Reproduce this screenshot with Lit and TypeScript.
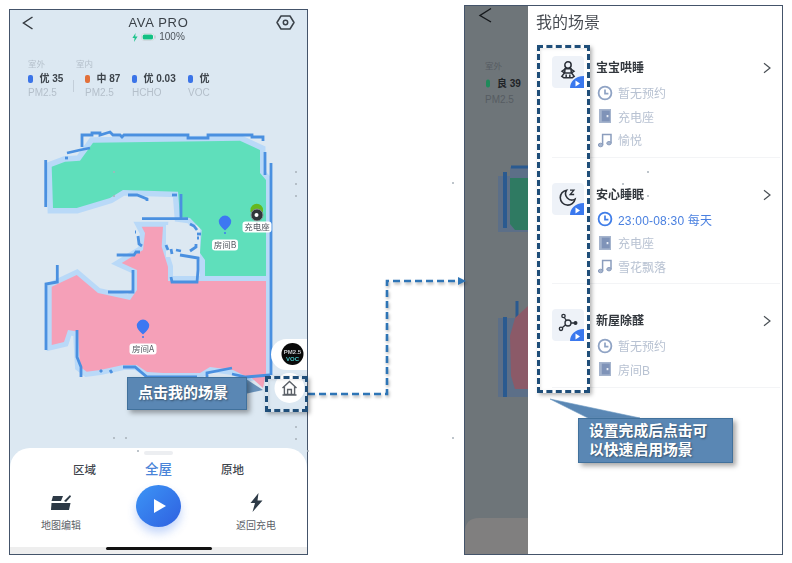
import { LitElement, html, css, svg } from "lit";
import { customElement } from "lit/decorators.js";

const GREEN = "51.7,166.7 65,161.7 80,160.7 93,142.7 240,140.7 260,150 260,173 266,180 266,276 205,276 205,260 200,253 201.7,230 190,218 180,216.7 178,191.7 123,190 110,198 76.7,208 53,208";
const PINK = "51.7,286.7 76.7,275 98,293 130,300 137,290 137,270 121.7,263 143,250 145,233 141.7,226.7 163,226.7 161.7,246.7 168,266.7 168,281 266,281 266,373 246.7,376.7 233,370 210,367 200,373 163,373 147,372 136.7,365 123,365 100,370 86.7,371.7 80,366.7 78,331.7 68,330 64,342 51.7,345";
const WALLS = [
  "82,147 82,135 92,135 92,133 100,133 100,135 110,132 113,135 120,135 122,137 124,135 188,135 188,138 208,138 208,135 252,135 252,137 263,137 263,141",
  "45.7,160 45.7,207", "67,153 80,150 90,148", "65,158 68,158", "265,152 265,175", "271,163 271,375",
  "142,218.7 188,218.7", "181,194 181,218.7", "128,195 137,195 147,199 147,201", "172,195 177,195",
  "190,224 194,226 197,230", "197,234 201,234", "197,238 199,238", "196,244 196,247 190,251", "181,251 176,250", "166,245 168,250", "171,249 172,254",
  "180,255 198,258 198,270 197,282 172,282 171,277", "135,232 136,232", "138,236 139,244 142,246",
  "116.7,255 134,255 136,252 140,252", "57.3,265 57.3,282 46,284 46,350",
  "108,292 133,292 133,270", "77,330 77,357 81,367 81,377",
  "100,370 102,372", "110,370 112,373", "123,367 135,367 147,377 197,377", "207,383 207,373 232,368",
  "232,374 246,377 270,375",
];
const DOTS = [[114,172],[296,172],[296,184],[296,196],[114,196],[114,438],[126,438],[296,427],[296,439]];
const ICON_BLUE = "#8fa3c4";

function clock(color: string) {
  return svg`<svg class="ic" viewBox="0 0 16 16"><circle cx="8" cy="8" r="6.4" fill="none" stroke=${color} stroke-width="1.8"/><path d="M8 4.4V8.6H11.4" fill="none" stroke=${color} stroke-width="1.7"/></svg>`;
}
const door = svg`<svg class="ic" viewBox="0 0 16 16"><rect x="2" y="1" width="12" height="14" fill="#a5b4cd"/><rect x="4.8" y="2.6" width="8" height="10.8" fill="#7f93b8"/><rect x="9.6" y="7" width="1.8" height="2.2" fill="#e8edf5"/></svg>`;
const note = svg`<svg class="ic" viewBox="0 0 16 16"><path d="M5.6 13V2.4H14V11" fill="none" stroke="#8b9dbd" stroke-width="1.5"/><ellipse cx="3.6" cy="13" rx="2.3" ry="1.8" fill="#a5b4cd" stroke="#8b9dbd" stroke-width="1"/><ellipse cx="12" cy="11.2" rx="2.2" ry="1.7" fill="#a5b4cd" stroke="#8b9dbd" stroke-width="1"/></svg>`;

const babyIcon = svg`<svg class="glyph" viewBox="0 0 24 24" fill="none" stroke="#2b3038" stroke-width="1.8"><circle cx="12" cy="6" r="3.8"/><path d="M8.4 10.5H15.6L16 15.5H8Z"/><path d="M8.4 11 4.8 13.4 7.8 15.6M15.6 11 19.2 13.4 16.2 15.6"/><path d="M7.8 15.5 4.6 19.6 7 21.4H17L19.4 19.6 16.2 15.5"/><path d="M9.8 21V17.4M14.2 21V17.4"/></svg>`;
const moonIcon = svg`<svg class="glyph" viewBox="0 0 24 24" fill="none" stroke="#2b3038" stroke-width="1.9"><path d="M10.4 3.8A9 9 0 1 0 20.5 14.6 7.6 7.6 0 0 1 10.4 3.8Z"/><path d="M14.4 3.8H19L14.6 9H19.4" stroke-width="1.6"/></svg>`;
const moleculeIcon = svg`<svg class="glyph" viewBox="0 0 24 24" fill="none" stroke="#2b3038" stroke-width="1.6"><circle cx="12" cy="12" r="3.6"/><circle cx="6.6" cy="3.6" r="2"/><circle cx="3.6" cy="19" r="2"/><circle cx="21" cy="12" r="1.6" fill="#2b3038"/><path d="M7.6 5.4 10 9M5 17.6 9.2 14M15.6 12H19.4"/></svg>`;

const scenes = [
  { title: "宝宝哄睡", icon: babyIcon, items: [{ k: "clock", t: "暂无预约" }, { k: "door", t: "充电座" }, { k: "note", t: "愉悦" }] },
  { title: "安心睡眠", icon: moonIcon, items: [{ k: "active", t: "23:00-08:30 每天" }, { k: "door", t: "充电座" }, { k: "note", t: "雪花飘落" }] },
  { title: "新屋除醛", icon: moleculeIcon, items: [{ k: "clock", t: "暂无预约" }, { k: "door", t: "房间B" }] },
];
const metrics = [
  { c: "#3b74e8", v: "优 35", l: "PM2.5", w: 47, sep: true },
  { c: "#e2703a", v: "中 87", l: "PM2.5", w: 47, sep: false },
  { c: "#3b74e8", v: "优 0.03", l: "HCHO", w: 56, sep: false },
  { c: "#3b74e8", v: "优", l: "VOC", w: 40, sep: false },
];

function pin(x: number, y: number) {
  return svg`<path d="M${x} ${y + 7.5}C${x - 4} ${y + 4} ${x - 6.2} ${y + 1.5} ${x - 6.2} ${y - 1.2}A6.2 6.2 0 1 1 ${x + 6.2} ${y - 1.2}C${x + 6.2} ${y + 1.5} ${x + 4} ${y + 4} ${x} ${y + 7.5}Z" fill="#3d78f2"/><circle cx=${x} cy=${y + 10} r="1" fill="#3d78f2"/>`;
}
function label(cx: number, cy: number, w: number, t: string) {
  return svg`<rect x=${cx - w / 2} y=${cy - 5.5} width=${w} height="11" rx="3" fill="#fff"/><text x=${cx} y=${cy + 3} text-anchor="middle" font-size="8.5" fill="#555b63" font-family="'Noto Sans CJK SC',sans-serif">${t}</text>`;
}

@customElement("app-root")
export class AppRoot extends LitElement {
  static styles = css`
    :host { display: block; width: 792px; height: 563px; position: relative; overflow: hidden; background: #fff;
      font-family: "Liberation Sans", "Noto Sans CJK SC", sans-serif; }
    .page { display: flex; align-items: flex-start; padding: 5px 0 0 9px; height: 563px; box-sizing: border-box; }
    .phone { box-sizing: border-box; width: 299px; height: 546px; margin-top: 4px; border: 1px solid #44546a; background: #dce8f2;
      display: flex; flex-direction: column; position: relative; overflow: hidden; }
    .soft { filter: blur(0.35px); display: flex; flex-direction: column; height: 100%; }
    .nav { display: grid; grid-template-columns: 40px 1fr 40px; height: 43px; flex: none; }
    .back { margin: 5px 0 0 12px; width: 12px; height: 16px; }
    .center { display: flex; flex-direction: column; align-items: center; padding-top: 4px; }
    .name { font-size: 13px; line-height: 17px; color: #3a4148; letter-spacing: .7px; }
    .status { display: flex; align-items: center; gap: 3px; font-size: 10px; line-height: 12px; color: #4c535a; }
    .hex { margin: 5px 0 0 9px; width: 19px; height: 15px; }
    .air { padding: 5px 0 0 18px; flex: none; height: 52px; box-sizing: border-box; }
    .air-heads { display: flex; font-size: 8.5px; line-height: 12px; color: #b4bfca; }
    .air-heads span:first-child { width: 48px; }
    .air-row { display: flex; margin-top: 2px; }
    .metric { flex: none; box-sizing: border-box; }
    .metric.sep { position: relative; }
    .metric.sep::after { content: ""; position: absolute; left: 45px; top: 8px; width: 1px; height: 12px; background: #c3ced9; }
    .val { display: flex; align-items: center; gap: 7px; font-size: 10px; line-height: 14px; font-weight: 700; color: #3d444b; }
    .dot { width: 4.5px; height: 8px; border-radius: 2px; }
    .lab { font-size: 10px; line-height: 14px; color: #b4bfca; }
    .map { display: block; flex: none; width: 297px; height: 343px; }
    .sheet { position: absolute; left: 0; right: 0; bottom: 0; height: 106px; background: #fff; border-radius: 20px 20px 0 0;
      display: flex; flex-direction: column; align-items: center; }
    .handle { width: 29px; height: 4px; border-radius: 2px; background: #eceef1; margin-top: 3px; flex: none; }
    .tabs { display: grid; grid-template-columns: repeat(3, 74px); justify-items: center; margin-top: 6px; font-size: 11.5px; line-height: 18px; font-weight: 500; color: #3f464d; }
    .tabs .on { color: #4a84d8; font-size: 13.5px; }
    .actions { display: grid; grid-template-columns: 102px 93px 102px; width: 297px; margin-top: 6px; justify-items: center; }
    .act { display: flex; flex-direction: column; align-items: center; font-size: 10px; color: #5c6268; line-height: 12px; gap: 8px; padding-top: 8px; }
    .act svg { width: 20px; height: 19px; display: block; }
    .play { width: 45px; height: 42px; border-radius: 50%; background: linear-gradient(135deg, #3c95f6, #2f60e0); box-shadow: 0 6px 10px rgba(60,120,240,.3);
      display: flex; align-items: center; justify-content: center; }
    .play svg { width: 14px; height: 14px; display: block; margin-left: 2px; }
    .bar { position: absolute; left: 0; right: 0; bottom: 0; height: 7px; background: #eeeeee; display: flex; justify-content: center; }
    .bar i { display: block; width: 106px; height: 3px; border-radius: 2px; background: #111; }

    .phone2 { box-sizing: border-box; width: 319px; height: 550px; margin-left: 156px; border: 1px solid #44546a; background: #6e7579; display: flex; position: relative; overflow: hidden; }
    .strip { flex: none; width: 63px; position: relative; }
    .strip svg { position: absolute; inset: 0; width: 63px; height: 548px; display: block; }
    .panel { flex: 1; background: #fff; padding: 0 2px 0 8px; box-sizing: border-box; filter: blur(0.3px); }
    .h1 { font-size: 16px; line-height: 24px; margin-top: 5px; color: #4b4f55; height: 20px; padding-bottom: 25px; font-weight: 400; }
    .row { display: grid; grid-template-columns: 32px 1fr; column-gap: 12px; margin-left: 16px; padding: 25px 0 5px; border-bottom: 1px solid #f3f4f6; }
    .h1 + .row { padding-top: 0; }
    .row:last-child { padding-bottom: 6px; }
    .tile { width: 32px; height: 32px; border-radius: 4px; background: #eef2f8; position: relative; display: flex; align-items: flex-start; justify-content: center; padding-top: 4px; box-sizing: border-box; }
    .glyph { width: 20px; height: 20px; display: block; }
    .badge { position: absolute; right: 0; bottom: 0; width: 14px; height: 12px; }
    .title { font-size: 12px; line-height: 24px; font-weight: 700; color: #33383e; display: flex; justify-content: space-between; align-items: center; padding-right: 9px; height: 24px; margin-bottom: 1px; }
    .title svg { width: 8px; height: 12px; display: block; }
    .item { display: flex; align-items: center; gap: 5px; height: 23.5px; font-size: 12px; color: #b8c2d2; margin-left: 1px; }
    .item.active { color: #4a80e0; font-size: 12px; letter-spacing: .2px; }
    .ic { width: 16px; height: 16px; flex: none; display: block; }

    .overlay { position: absolute; left: 0; top: 0; width: 792px; height: 563px; pointer-events: none; }
    .link { filter: drop-shadow(1px 2px 1.5px rgba(0,0,0,.3)); }
    .callout { position: absolute; box-sizing: border-box; background: #5a87b4; border: 1px solid #41719c; box-shadow: 3px 3px 5px rgba(0,0,0,.35);
      color: #fff; font-weight: 700; font-size: 15px; text-shadow: 1px 1px 2px rgba(0,0,0,.4); }
    .c1 { left: 127px; top: 377px; width: 120px; height: 33px; line-height: 30px; padding-left: 10px; }
    .c2 { left: 578px; top: 418px; width: 155px; height: 45px; line-height: 18.5px; padding: 3px 0 0 10px; font-size: 14.8px; }
    .dashbox { position: absolute; box-sizing: border-box; border: 3px dashed #1f4e79; box-shadow: 2px 2px 4px rgba(0,0,0,.3), inset 1px 1px 3px rgba(0,0,0,.1); }
    .d1 { left: 265px; top: 376px; width: 43px; height: 36px; }
    .d2 { left: 537px; top: 45px; width: 53px; height: 348px; }
  `;

  private renderMap() {
    return svg`<svg class="map" viewBox="10 105 297 343">
      <polygon points=${GREEN} fill="#b9d9f8" stroke="#b9d9f8" stroke-width="11"/>
      <polygon points=${PINK} fill="#b9d9f8" stroke="#b9d9f8" stroke-width="10"/>
      <rect x="166" y="225" width="34" height="32" fill="#dce8f2"/>
      <polygon points=${GREEN} fill="#5fdfbb"/>
      <polygon points=${PINK} fill="#f5a0b8"/>
      <polygon points="246,373 266,373 263,388" fill="#f5a0b8"/>
      ${WALLS.map((w) => svg`<polyline points=${w} fill="none" stroke="#4a90e0" stroke-width="2.8"/>`)}
      ${DOTS.map(([x, y]) => svg`<circle cx=${x} cy=${y} r="1" fill="#a9b2ba"/>`)}
      ${pin(225, 223)}
      ${label(225, 245, 26, "房间B")}
      ${pin(143, 327)}
      ${label(143, 349, 27, "房间A")}
      <path d="M250.5 210A6 6 0 0 1 263 210L263 212H250.5Z" fill="#65b81e"/>
      <circle cx="257" cy="215" r="6" fill="#30353a" stroke="#8a9096" stroke-width="1"/>
      <circle cx="256.5" cy="215" r="2" fill="#fff"/>
      ${label(257, 227, 29, "充电座")}
      <rect x="271" y="339" width="50" height="31" rx="15.5" fill="#fff"/>
      <circle cx="292.5" cy="354" r="11" fill="#0a0a0a"/>
      <text x="292.5" y="354" text-anchor="middle" font-size="6" font-weight="700" fill="#c9ccd0" font-family="'Liberation Sans',sans-serif">PM2.5</text>
      <text x="292.5" y="361" text-anchor="middle" font-size="6" font-weight="700" fill="#48c7c7" font-family="'Liberation Sans',sans-serif">VOC</text>
      <circle cx="289.5" cy="388" r="15" fill="#fff"/>
      <path d="M282.5 388 289.5 381.5 296.5 388M284.4 386.5V394.5H294.6V386.5M287.6 394.5V389.5H291.4V394.5M282.5 395H296.5" fill="none" stroke="#5c6168" stroke-width="1.4"/>
    </svg>`;
  }

  private renderStrip() {
    return svg`<svg viewBox="0 0 63 548">
      <path d="M26 2.5 15 9.5 26 16" fill="none" stroke="#16191c" stroke-width="1.4"/>
      <text x="20" y="63" font-size="8.5" fill="#565c62" font-family="'Noto Sans CJK SC',sans-serif">室外</text>
      <rect x="21" y="73.5" width="4" height="8" rx="2" fill="#1f8a5a"/>
      <text x="32" y="81" font-size="10" font-weight="700" fill="#1f2327" font-family="'Liberation Sans','Noto Sans CJK SC',sans-serif">良 39</text>
      <text x="20" y="97" font-size="10" fill="#565c62" font-family="'Liberation Sans',sans-serif">PM2.5</text>
      <path d="M45 161H63V186H45Z" fill="#5c6f88"/>
      <path d="M46 161H63" stroke="#2a5a90" stroke-width="3"/>
      <path d="M33 170H63V226H33Z" fill="#5c6f88"/>
      <path d="M45 172H63V224H50L45 218Z" fill="#2f7a62"/>
      <path d="M40 166V222" stroke="#2a5a90" stroke-width="4"/>
      <path d="M33 312H63V391H33Z" fill="#5c6f88"/>
      <path d="M52 295V314" stroke="#2a5a90" stroke-width="3"/>
      <path d="M45 330 50 312 63 300V383H50L46 370Z" fill="#8b5a68"/>
      <path d="M40 311V391" stroke="#2a5a90" stroke-width="4"/>
      <path d="M0 548V526Q0 512 14 512H63V548Z" fill="#807f7f"/>
    </svg>`;
  }

  render() {
    return html`
      <div class="page">
        <section class="phone">
          <div class="soft">
            <div class="nav">
              <svg class="back" viewBox="0 0 12 16"><path d="M10.5 2 1.5 8 10.5 14" fill="none" stroke="#33393f" stroke-width="1.5"/></svg>
              <div class="center">
                <div class="name">AVA PRO</div>
                <div class="status">
                  <svg width="6" height="9" viewBox="0 0 6 9"><path d="M3.6 0 .4 5H2.6L2 9 5.6 3.6H3.2Z" fill="#1fc48c"/></svg>
                  <svg width="15" height="8" viewBox="0 0 15 8"><rect x=".5" y=".5" width="12.5" height="7" rx="2.5" fill="#fff" stroke="#cfd8df"/><rect x="1.6" y="1.6" width="10.4" height="4.8" rx="1.5" fill="#12c084"/><rect x="13.5" y="2.5" width="1" height="3" fill="#b6c0c8"/></svg>
                  <span>100%</span>
                </div>
              </div>
              <svg class="hex" viewBox="0 0 19 15"><path d="M5 1H14L18 7.5 14 14H5L1 7.5Z" fill="none" stroke="#3a4148" stroke-width="1.5" stroke-linejoin="round"/><circle cx="9.5" cy="7.5" r="2.2" fill="none" stroke="#3a4148" stroke-width="1.5"/></svg>
            </div>
            <div class="air">
              <div class="air-heads"><span>室外</span><span>室内</span></div>
              <div class="air-row">
                ${metrics.map((m) => html`
                  <div class="metric ${m.sep ? "sep" : ""}" style="width:${m.w + (m.sep ? 10 : 0)}px">
                    <div class="val"><i class="dot" style="background:${m.c}"></i><span>${m.v}</span></div>
                    <div class="lab">${m.l}</div>
                  </div>`)}
              </div>
            </div>
            ${this.renderMap()}
          </div>
          <div class="sheet">
            <div class="handle"></div>
            <div class="tabs"><span>区域</span><span class="on">全屋</span><span>原地</span></div>
            <div class="actions">
              <div class="act">
                <svg viewBox="0 0 20 15"><path d="M2 1H12L10 6H.5Z" fill="#2d3a46"/><path d="M13 6 19 0 20 1.5 15 7Z" fill="#2d3a46"/><path d="M.5 8H19.5L18 15H0Z" fill="#2d3a46"/></svg>
                <span>地图编辑</span>
              </div>
              <div class="play"><svg viewBox="0 0 14 14"><path d="M1 0 13 7 1 14Z" fill="#fff"/></svg></div>
              <div class="act">
                <svg viewBox="0 0 16 19"><path d="M10.5 0 2.5 10H7L4.5 19 14.5 7.5H9.5Z" fill="#2d3a46"/></svg>
                <span>返回充电</span>
              </div>
            </div>
            <div class="bar"><i></i></div>
          </div>
        </section>

        <section class="phone2">
          <div class="strip">${this.renderStrip()}</div>
          <div class="panel">
            <div class="h1">我的场景</div>
            ${scenes.map((s) => html`
              <div class="row">
                <div class="tile">
                  ${s.icon}
                  <svg class="badge" viewBox="0 0 14 12"><path d="M0 12C0 6 5 0 14 0V12Z" fill="#3a78ee"/><path d="M5.5 4.5 10 7.5 5.5 10.5Z" fill="#fff"/></svg>
                </div>
                <div>
                  <div class="title"><span>${s.title}</span><svg viewBox="0 0 8 12"><path d="M1 1.2 7 6 1 10.8" fill="none" stroke="#4a5056" stroke-width="1.2"/></svg></div>
                  ${s.items.map((it) => html`
                    <div class="item ${it.k === "active" ? "active" : ""}">
                      ${it.k === "active" ? clock("#3f7de8") : it.k === "clock" ? clock(ICON_BLUE) : it.k === "door" ? door : note}
                      <span>${it.t}</span>
                    </div>`)}
                </div>
              </div>`)}
          </div>
        </section>
      </div>

      <svg class="overlay" viewBox="0 0 792 563">
        <g class="link">
          <path d="M308 394H387V281H458" fill="none" stroke="#2e75b6" stroke-width="2.6" stroke-dasharray="7 4"/>
          <path d="M458 277 466 281 458 285Z" fill="#2e75b6"/>
        </g>
        <polygon points="246,379 263,390 236,396" fill="#5a87b4" fill-opacity=".9"/>
        <polygon points="550,399 640,418 588,418" fill="#5a87b4" stroke="#6f9ac2" stroke-width=".6"/>
        <g fill="#a9b2ba">
          <circle cx="648" cy="172" r="1"/><circle cx="623" cy="184" r="1"/><circle cx="648" cy="196" r="1"/>
          <circle cx="453" cy="183" r="1"/><circle cx="453" cy="438" r="1"/><circle cx="138" cy="451" r="1"/><circle cx="308" cy="451" r="1"/>
        </g>
      </svg>
      <div class="callout c1">点击我的场景</div>
      <div class="callout c2">设置完成后点击可<br />以快速启用场景</div>
      <div class="dashbox d1"></div>
      <div class="dashbox d2"></div>
    `;
  }
}
